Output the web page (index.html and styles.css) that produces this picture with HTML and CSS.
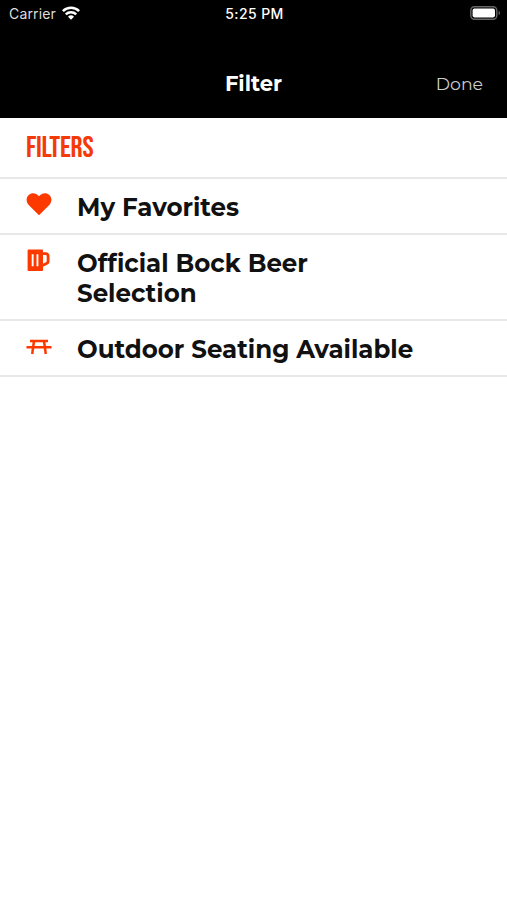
FILE: index.html
```html
<!DOCTYPE html>
<html lang="en">
<head>
<meta charset="utf-8">
<title>Filter</title>
<link rel="stylesheet" href="styles.css">
</head>
<body>
<header class="header">
  <div class="status">
    <div class="carrier"><span class="carrier-name">Carrier</span>
      <svg class="wifi" width="18" height="14" viewBox="0 0 18 14" fill="none" stroke="#fff" stroke-width="2.5"><path d="M.9 5.2a11.5 11.5 0 0 1 16.2 0"/><path d="M3.8 8.3a7.4 7.4 0 0 1 10.4 0"/><path d="M9 13.7 6 10.8a4.3 4.3 0 0 1 6 0z" fill="#fff" stroke="none"/></svg>
    </div>
    <time class="time">5:25 PM</time>
    <svg class="battery" width="31" height="14" viewBox="0 0 31 14"><rect x=".8" y=".8" width="26" height="12.4" rx="3.6" fill="none" stroke="#666" stroke-width="1.4"/><rect x="2.6" y="2.6" width="22.4" height="8.8" rx="1.8" fill="#fff"/><path d="M28.6 4.8c2 .8 2 3.6 0 4.4z" fill="#666"/></svg>
  </div>
  <nav class="nav">
    <h1 class="title">Filter</h1>
    <a class="done">Done</a>
  </nav>
</header>
<main>
  <div class="section"><h2 class="section-title">FILTERS</h2></div>
  <ul class="list">
    <li class="row">
      <svg class="icon" width="26" height="24" viewBox="0 0 26 24" fill="#fc3a00"><path d="M13 23.2 2.7 13C-.2 10 0 5.3 2.7 2.9 5.6.3 9.6.8 12 3.3l1 1 1-1c2.4-2.5 6.4-3 9.3-.4C26 5.3 26.200 10 23.300 13z"/></svg>
      <span class="label">My Favorites</span>
    </li>
    <li class="row">
      <svg class="icon" width="26" height="24" viewBox="0 0 26 24" fill="#fc3a00" fill-rule="evenodd"><path d="M2.800 1.500h13c.7 0 1.200.5 1.200 1.200V4.200h2.800c2.100 0 3.700 1.600 3.700 3.700v5.600c0 1.300-.7 2.500-1.900 3.100L17 18.800v3.100c0 .7-.5 1.200-1.200 1.200H2.800c-.7 0-1.200-.5-1.200-1.200V2.700c0-.7.5-1.200 1.200-1.200zM5.700 6.200v12h1.900v-12zM10.500 6.200v12h1.900v-12zM17 7v8.700l2.900-1.400c.5-.2.8-.7.8-1.200V8.100c0-.6-.5-1.100-1.100-1.100z"/></svg>
      <span class="label">Official Bock Beer<br>Selection</span>
    </li>
    <li class="row">
      <svg class="icon" width="26" height="24" viewBox="0 0 26 24" fill="none" stroke="#fc3a00" stroke-width="2.500"><path d="M4 7h18M.5 13.300h25"/><path d="m8 7-1.800 13M18 7l1.800 13"/></svg>
      <span class="label">Outdoor Seating Available</span>
    </li>
  </ul>
</main>
</body>
</html>
```
FILE: styles.css
```css
* { box-sizing: border-box; }
body { margin: 0; background: #fff; color: #111; font-family: Montserrat, Inter, "Liberation Sans", sans-serif; }
h1, h2, ul { margin: 0; padding: 0; }
.header { height: 118px; background: #000; color: #fff; }
.status { height: 26px; padding: 0 6px 0 9px; display: grid; grid-template-columns: 1fr auto 1fr; align-items: center; font-family: Inter, sans-serif; font-size: 14px; }
.carrier { display: flex; align-items: center; gap: 6px; color: #ddd; }
.carrier-name { letter-spacing: 0.15px; }
.time { font-weight: 500; letter-spacing: 0.4px; margin-right: 1px; }
.battery { justify-self: end; }
.nav { height: 92px; padding: 24px 24px 0; display: grid; grid-template-columns: 1fr auto 1fr; align-items: center; }
.title { grid-column: 2; font-size: 21px; line-height: 24px; font-weight: 700; }
.done { justify-self: end; font-size: 17.3px; line-height: 22px; font-weight: 400; color: #ccc; padding-bottom: 1px; }
.section { height: 61px; padding: 12px 26px 0; border-bottom: 2px solid #e8e8e8; }
.section-title { font-family: "Bebas Neue", Roboto, sans-serif; font-size: 30px; line-height: 36px; font-weight: 400; letter-spacing: -0.25px; color: #f43a06; }
.list { list-style: none; }
.row { display: flex; align-items: flex-start; gap: 25px; padding: 13px 26px 11px; border-bottom: 2px solid #e8e8e8; }
.icon { flex: none; }
.label { font-size: 24.5px; line-height: 30px; font-weight: 700; font-variant-ligatures: none; }
```
